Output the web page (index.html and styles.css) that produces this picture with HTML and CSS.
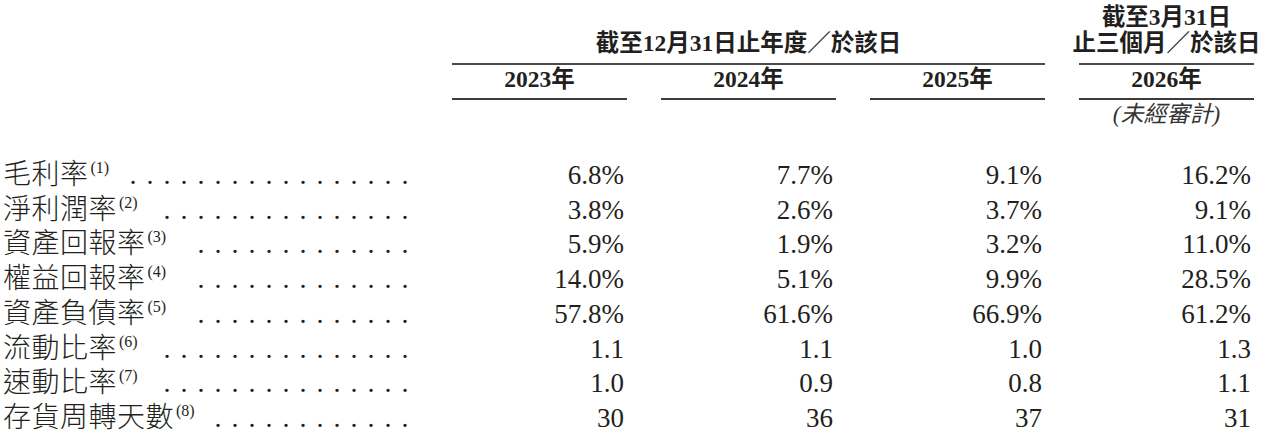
FILE: index.html
```html
<!DOCTYPE html>
<html lang="zh-Hant">
<head>
<meta charset="utf-8">
<title>財務比率</title>
<link rel="stylesheet" href="styles.css">
</head>
<body>
<div class="sheet">
  <div class="head">
    <div class="h-span">截至12月31日止年度／於該日</div>
    <div class="h-q"><span>截至3月31日</span><span>止三個月／於該日</span></div>
    <div class="yr y1">2023年</div>
    <div class="yr y2">2024年</div>
    <div class="yr y3">2025年</div>
    <div class="yr y4">2026年</div>
    <div class="unaud">(未經審計)</div>
  </div>
  <div class="body">
    <div class="lbl"><span class="t">毛利率<sup class="fn">(1)</sup></span><span class="lead"><span>. . . . . . . . . . . . . . . . .</span></span></div>
    <div class="num">6.8%</div><div class="num">7.7%</div><div class="num">9.1%</div><div class="num">16.2%</div>

    <div class="lbl"><span class="t">淨利潤率<sup class="fn">(2)</sup></span><span class="lead"><span>. . . . . . . . . . . . . . .</span></span></div>
    <div class="num">3.8%</div><div class="num">2.6%</div><div class="num">3.7%</div><div class="num">9.1%</div>

    <div class="lbl"><span class="t">資產回報率<sup class="fn">(3)</sup></span><span class="lead"><span>. . . . . . . . . . . . .</span></span></div>
    <div class="num">5.9%</div><div class="num">1.9%</div><div class="num">3.2%</div><div class="num">11.0%</div>

    <div class="lbl"><span class="t">權益回報率<sup class="fn">(4)</sup></span><span class="lead"><span>. . . . . . . . . . . . .</span></span></div>
    <div class="num">14.0%</div><div class="num">5.1%</div><div class="num">9.9%</div><div class="num">28.5%</div>

    <div class="lbl"><span class="t">資產負債率<sup class="fn">(5)</sup></span><span class="lead"><span>. . . . . . . . . . . . .</span></span></div>
    <div class="num">57.8%</div><div class="num">61.6%</div><div class="num">66.9%</div><div class="num">61.2%</div>

    <div class="lbl"><span class="t">流動比率<sup class="fn">(6)</sup></span><span class="lead"><span>. . . . . . . . . . . . . . .</span></span></div>
    <div class="num">1.1</div><div class="num">1.1</div><div class="num">1.0</div><div class="num">1.3</div>

    <div class="lbl"><span class="t">速動比率<sup class="fn">(7)</sup></span><span class="lead"><span>. . . . . . . . . . . . . . .</span></span></div>
    <div class="num">1.0</div><div class="num">0.9</div><div class="num">0.8</div><div class="num">1.1</div>

    <div class="lbl"><span class="t">存貨周轉天數<sup class="fn">(8)</sup></span><span class="lead"><span>. . . . . . . . . . . .</span></span></div>
    <div class="num">30</div><div class="num">36</div><div class="num">37</div><div class="num">31</div>
  </div>
</div>
</body>
</html>
```

FILE: styles.css
```css
* { box-sizing: border-box; }

html, body {
  margin: 0;
  background: #ffffff;
}

body {
  color: #231f20;
  font-family: "Liberation Serif", "Noto Sans CJK TC", serif;
}

.sheet {
  width: 1264px;
  padding: 4px 0 0 3px;
}

.head,
.body {
  display: grid;
  grid-template-columns: 415px repeat(4, 175px);
  column-gap: 34px;
}

.head {
  font-size: 23.5px;
  font-weight: 700;
  line-height: 26px;
}

.h-span {
  grid-column: 2 / 5;
  grid-row: 1;
  align-self: end;
  text-align: center;
  white-space: nowrap;
  padding-bottom: 7px;
  border-bottom: 2px solid #4a4a4a;
}

.h-q {
  grid-column: 5;
  grid-row: 1;
  display: flex;
  flex-direction: column;
  align-items: center;
  white-space: nowrap;
  padding-bottom: 7px;
  border-bottom: 2px solid #4a4a4a;
}

.yr {
  grid-row: 2;
  text-align: center;
  white-space: nowrap;
  padding: 1px 0 6px;
  border-bottom: 2px solid #3c3c3c;
}

.y1 { grid-column: 2; }
.y2 { grid-column: 3; }
.y3 { grid-column: 4; }
.y4 { grid-column: 5; }

.unaud {
  grid-row: 3;
  grid-column: 5;
  text-align: center;
  font-size: 23px;
  font-weight: 400;
  font-style: italic;
  padding-top: 2px;
  color: #333333;
}

.body {
  margin-top: 30px;
  font-size: 28px;
  line-height: 34.7px;
}

.lbl {
  display: flex;
  align-items: flex-start;
  white-space: nowrap;
  padding-right: 8px;
}

.t {
  flex: none;
  letter-spacing: 0.5px;
  font-weight: 300;
}

.fn {
  font-size: 16px;
  line-height: 1;
  vertical-align: 11px;
  letter-spacing: 0;
  margin-left: 2px;
  font-weight: 400;
}

.lead {
  flex: 1;
  min-width: 0;
  display: flex;
  justify-content: flex-end;
  margin-left: 6px;
}

.lead span {
  flex: none;
  letter-spacing: 1.5px;
}

.num {
  text-align: right;
  padding-right: 3px;
  font-size: 27px;
  white-space: nowrap;
}
```
